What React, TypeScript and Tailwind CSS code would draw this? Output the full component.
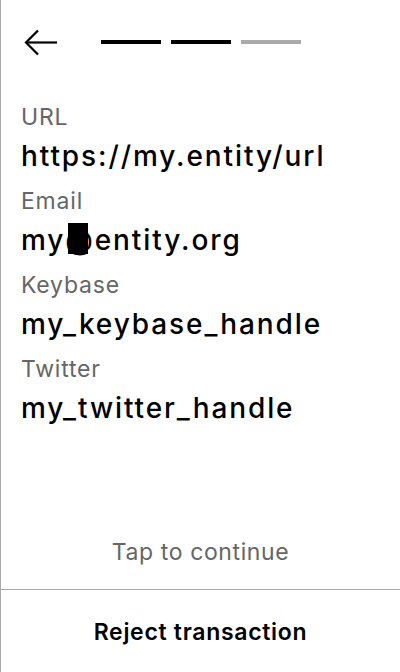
import React from 'react';

const fields = [
  { label: 'URL', value: 'https://my.entity/url' },
  { label: 'Email', value: 'email' },
  { label: 'Keybase', value: 'my_keybase_handle' },
  { label: 'Twitter', value: 'my_twitter_handle' },
];

const BackArrow = () => (
  <svg width="34" height="28" viewBox="0 0 34 28" fill="none" stroke="black" strokeWidth="2.2">
    <path d="M33 13.5H2" />
    <path d="M14 1.5L2 13.5L14 25.5" />
  </svg>
);

const App = () => {
  return (
    <div
      className="h-[672px] w-[400px] flex flex-col bg-white border-l border-[#aaaaaa]"
      style={{ fontFamily: 'Inter, "Noto Sans", sans-serif' }}
    >
      <div className="flex items-center pl-[23px] pt-[29px]">
        <BackArrow />
        <div className="flex gap-[10px] ml-[43px] -mt-[2px]">
          <div className="w-[60px] h-[4px] bg-black" />
          <div className="w-[60px] h-[4px] bg-black" />
          <div className="w-[60px] h-[4px] bg-[#aaaaaa]" />
        </div>
      </div>

      <div className="flex flex-col pl-[20px] pt-[48px] gap-[13px]">
        {fields.map((f) => (
          <div key={f.label} className="flex flex-col">
            <div className="text-[23px] leading-[24px] tracking-[0.8px] text-[#666666]">{f.label}</div>
            <div className="text-[28px] leading-[40px] tracking-[1.9px] font-medium text-black mt-[7px] whitespace-nowrap">
              {f.value === 'email' ? (
                <span>
                  my
                  <span className="relative">
                    @
                    <span className="absolute left-[3px] top-0 w-[20px] h-[31px] bg-black" />
                  </span>
                  entity.org
                </span>
              ) : (
                f.value
              )}
            </div>
          </div>
        ))}
      </div>

      <div className="flex-1" />

      <div className="text-center text-[23px] leading-[28px] tracking-[0.6px] text-[#666666] pb-[23px]">
        Tap to continue
      </div>
      <div className="border-t border-[#aaaaaa] h-[83px] flex items-center justify-center pt-[2px]">
        <span className="text-[23px] leading-[28px] tracking-[0.7px] font-semibold text-black">Reject transaction</span>
      </div>
    </div>
  );
};

export default App;
